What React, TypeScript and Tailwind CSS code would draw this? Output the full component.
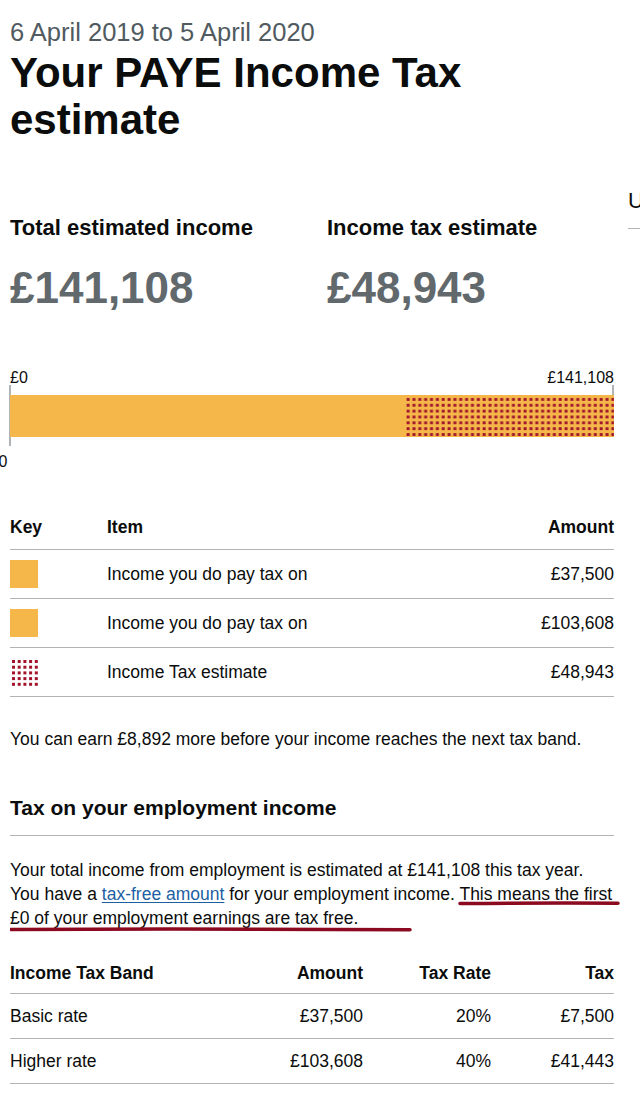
import React from "react";

const GOLD = "#f5b74a";
const DOT = "#a0142c";

const keyRows = [
  { key: "gold", item: "Income you do pay tax on", amount: "£37,500" },
  { key: "gold", item: "Income you do pay tax on", amount: "£103,608" },
  { key: "dots", item: "Income Tax estimate", amount: "£48,943" },
];

const bands = [
  { band: "Basic rate", amount: "£37,500", rate: "20%", tax: "£7,500" },
  { band: "Higher rate", amount: "£103,608", rate: "40%", tax: "£41,443" },
];

function DotSwatch() {
  const cells: number[] = [0, 1, 2, 3, 4];
  return (
    <svg width="28" height="28" className="block">
      {cells.map((r) =>
        cells.map((c) => (
          <rect key={`${r}-${c}`} x={2 + c * 5.7} y={2 + r * 5.7} width="3" height="3" fill={DOT} />
        ))
      )}
    </svg>
  );
}

function TaxBar() {
  return (
    <svg width="208" height="42" className="block">
      <defs>
        <pattern id="taxdots" width="5.85" height="5.85" patternUnits="userSpaceOnUse">
          <rect x="0.6" y="3" width="3" height="3" fill={DOT} />
        </pattern>
      </defs>
      <rect width="208" height="42" fill={GOLD} />
      <rect width="208" height="42" fill="url(#taxdots)" />
    </svg>
  );
}

export default function App() {
  return (
    <div className="w-[640px] h-[1095px] overflow-hidden bg-white pl-[10px] pt-[18px] text-[#0b0c0c] font-['Liberation_Sans',Arial,sans-serif]">
      {/* Page heading */}
      <div className="w-[604px]">
        <p className="text-[25.5px] leading-[28px] text-[#505a5f]">6 April 2019 to 5 April 2020</p>
        <h1 className="mt-[3px] text-[42px] leading-[47px] font-bold">Your PAYE Income Tax estimate</h1>
      </div>

      <div className="mt-[45px] flex gap-[14px]">
        <main className="w-[604px] shrink-0 pt-[27px]">
          {/* Summary figures */}
          <div className="grid grid-cols-[317px_1fr]">
            <div>
              <h2 className="text-[22px] leading-[26px] font-bold">Total estimated income</h2>
              <p className="mt-[23px] text-[44px] leading-[48px] font-bold text-[#62696d]">£141,108</p>
            </div>
            <div>
              <h2 className="text-[22px] leading-[26px] font-bold">Income tax estimate</h2>
              <p className="mt-[23px] text-[44px] leading-[48px] font-bold text-[#62696d]">£48,943</p>
            </div>
          </div>

          {/* Bar chart */}
          <div className="relative mt-[57px]">
            <div className="flex justify-between text-[16px] leading-[18px]">
              <span>£0</span>
              <span>£141,108</span>
            </div>
            <div className="absolute left-[-1px] top-[16px] h-[61px] w-[2px] bg-[#b1b4b6]" />
            <div className="absolute right-0 top-[16px] h-[52px] w-[2px] bg-[#b1b4b6]" />
            <span className="absolute left-[-20.5px] top-[84px] text-[16px] leading-[18px]">£0</span>
            <div className="relative mt-[8px] flex h-[42px]">
              <div className="w-[396px] bg-[#f5b74a]" />
              <TaxBar />
            </div>
          </div>

          {/* Key table */}
          <div className="mt-[78px] text-[17.5px] leading-[24px]">
            <div className="grid grid-cols-[97px_1fr_auto] border-b border-[#b1b4b6] pb-[10px] font-bold">
              <span>Key</span>
              <span>Item</span>
              <span className="text-right">Amount</span>
            </div>
            {keyRows.map((row, i) => (
              <div key={i} className="grid h-[49px] grid-cols-[97px_1fr_auto] items-center border-b border-[#b1b4b6]">
                <span>
                  {row.key === "gold" ? <span className="block h-[28px] w-[28px] bg-[#f5b74a]" /> : <DotSwatch />}
                </span>
                <span>{row.item}</span>
                <span className="text-right">{row.amount}</span>
              </div>
            ))}
          </div>

          <p className="mt-[30px] text-[17.5px] leading-[24px]">
            You can earn £8,892 more before your income reaches the next tax band.
          </p>

          {/* Employment income */}
          <h2 className="mt-[44px] border-b border-[#b1b4b6] pb-[14px] text-[21px] leading-[26px] font-bold">
            Tax on your employment income
          </h2>
          <div className="relative mt-[22px]">
            <p className="whitespace-nowrap text-[17.5px] leading-[24px]">
              Your total income from employment is estimated at £141,108 this tax year.
              <br />
              You have a{" "}
              <a href="#" className="text-[#1d5fa3] underline underline-offset-2">
                tax-free amount
              </a>{" "}
              for your employment income. This means the first
              <br />
              £0 of your employment earnings are tax free.
            </p>
            {/* hand-drawn highlight */}
            <svg className="pointer-events-none absolute left-0 top-0" width="620" height="80">
              <path d="M450 45.6 Q530 44.8 608 45.2" stroke="#8b0a1f" strokeWidth="3.5" strokeLinecap="round" fill="none" />
              <path d="M1 71.4 Q200 70.6 400 71.8" stroke="#8b0a1f" strokeWidth="3.5" strokeLinecap="round" fill="none" />
            </svg>
          </div>

          {/* Tax band table */}
          <div className="mt-[31px] text-[17.5px] leading-[24px]">
            <div className="grid grid-cols-[230px_123px_128px_123px] border-b border-[#b1b4b6] pb-[8px] font-bold">
              <span>Income Tax Band</span>
              <span className="text-right">Amount</span>
              <span className="text-right">Tax Rate</span>
              <span className="text-right">Tax</span>
            </div>
            {bands.map((b) => (
              <div key={b.band} className="grid h-[45px] grid-cols-[230px_123px_128px_123px] items-center border-b border-[#b1b4b6]">
                <span>{b.band}</span>
                <span className="text-right">{b.amount}</span>
                <span className="text-right">{b.rate}</span>
                <span className="text-right">{b.tax}</span>
              </div>
            ))}
          </div>
        </main>

        <aside className="w-[300px] shrink-0">
          <h2 className="border-b border-[#b1b4b6] pb-[14px] text-[22px] leading-[26px]">Useful links</h2>
        </aside>
      </div>
    </div>
  );
}
